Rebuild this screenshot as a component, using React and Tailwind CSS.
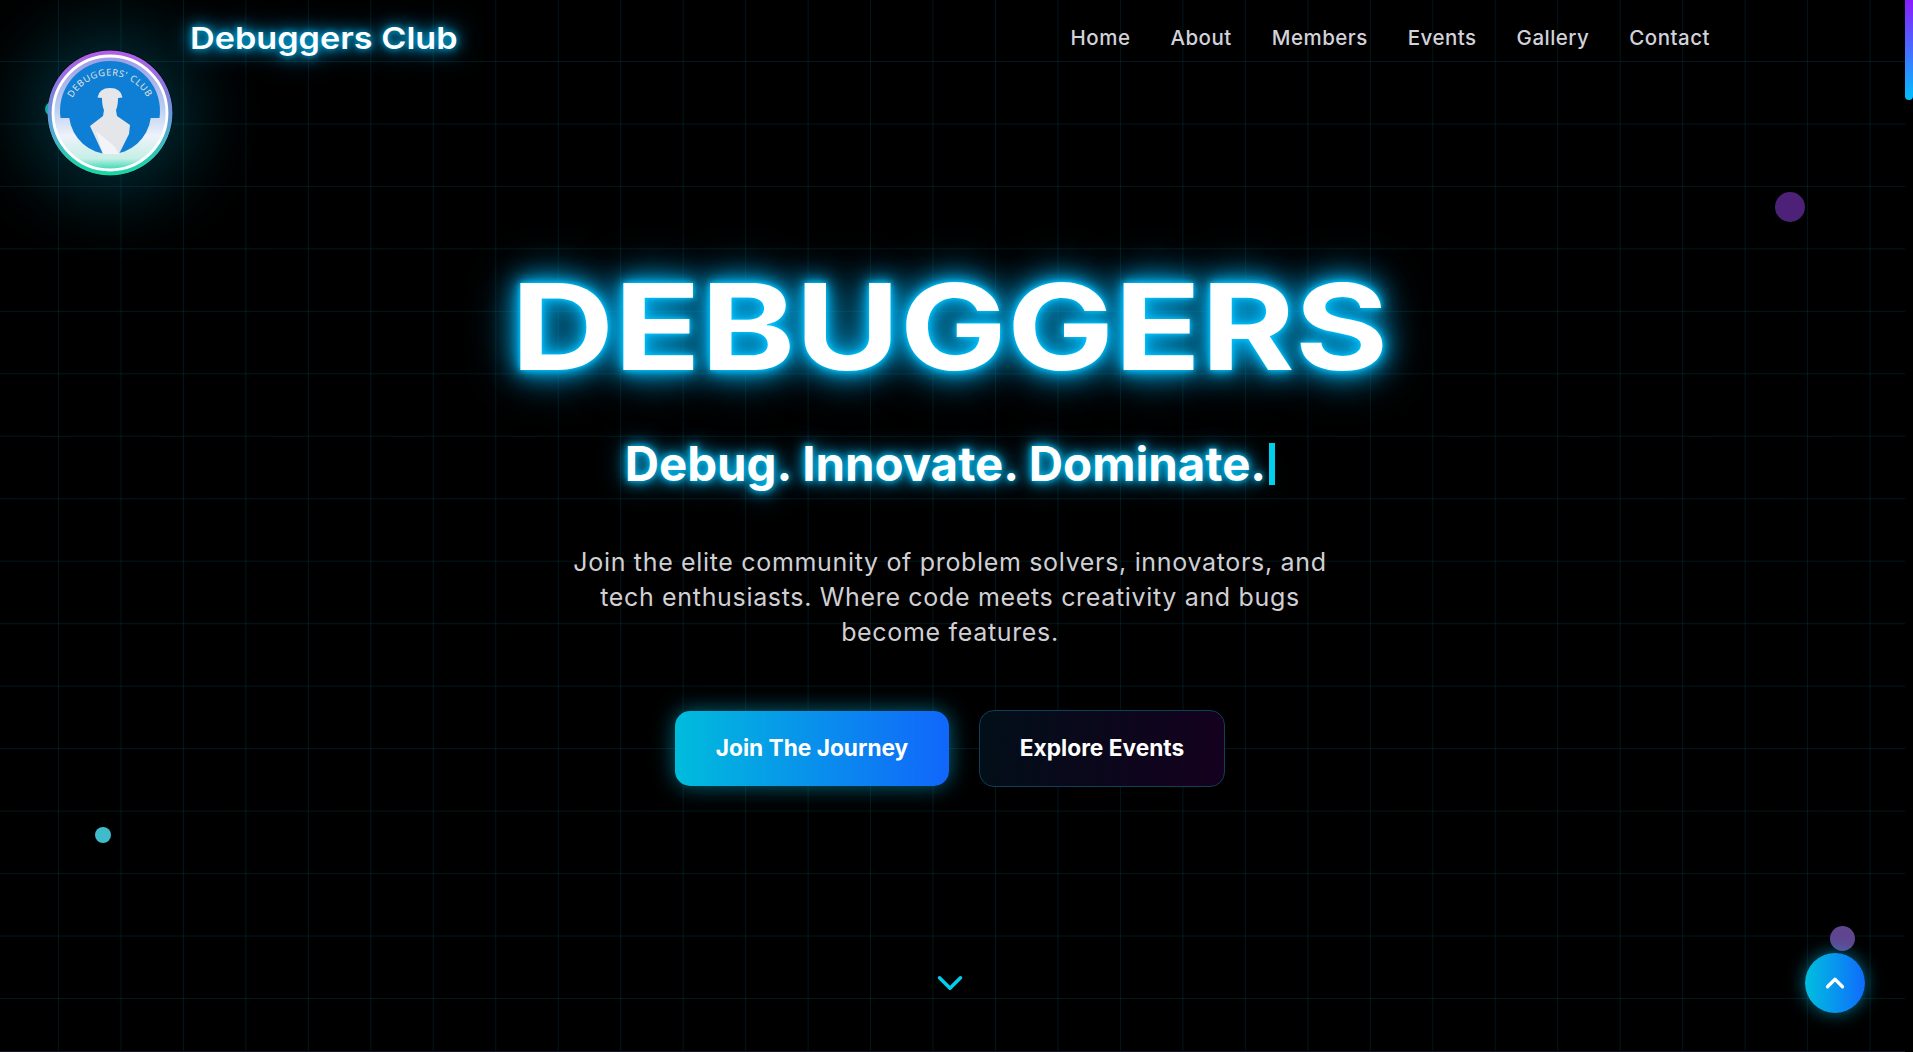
import React from "react";
import { ChevronUp, ChevronDown } from "lucide-react";

function Logo() {
  return (
    <svg viewBox="-63 -63 126 126" className="w-[126px] h-[126px] rounded-full shadow-[0_0_70px_24px_rgba(0,212,255,0.2)]">
      <defs>
        <linearGradient id="ring" x1="0" y1="0" x2="0" y2="1">
          <stop offset="0" stopColor="#b05ee8" />
          <stop offset="0.3" stopColor="#8a7ade" />
          <stop offset="0.6" stopColor="#58a4d6" />
          <stop offset="0.85" stopColor="#2cc8b4" />
          <stop offset="1" stopColor="#18d8a4" />
        </linearGradient>
        <linearGradient id="inner" x1="0" y1="0" x2="0" y2="1">
          <stop offset="0" stopColor="#9c9ce6" />
          <stop offset="0.45" stopColor="#b8cdf0" />
          <stop offset="0.7" stopColor="#eef2fa" />
          <stop offset="0.9" stopColor="#c6efe6" />
          <stop offset="1" stopColor="#30d8b0" />
        </linearGradient>
        <path id="arc" d="M-42,-2 A42.6,42.6 0 0 1 42,-2" />
      </defs>
      <circle r="62.5" fill="url(#ring)" />
      <circle r="57" fill="url(#inner)" stroke="#ffffff" strokeWidth="2.8" />
      <path d="M-49.5,5 A50,50 0 1 1 49.5,5 L40.7,5 A41,41 0 0 1 -40.7,5 Z" fill="#0f7fd6" />
      <path d="M-12.5,-15.5 Q-11,-25 0,-25 Q11,-25 12.5,-15.5 L8,-15 Q8,-7 6,-3 L7,3 L20,12 L19,21 L9,41 L-7,41 L-20,13 L-7,3 L-6,-3 Q-8,-7 -8,-15 Z" fill="#e4e6ea" />
      <path d="M-14,18 L4,33 L9,41 L-7,41 Z" fill="#f2f4fa" />
      <text fontFamily="'Open Sans', sans-serif" fontSize="9.2" fill="#ece8dc" letterSpacing="0.7">
        <textPath href="#arc" startOffset="50%" textAnchor="middle">DEBUGGERS' CLUB</textPath>
      </text>
    </svg>
  );
}

const links = ["Home", "About", "Members", "Events", "Gallery", "Contact"];

export default function App() {
  return (
    <div className="h-screen w-full flex bg-black overflow-hidden">
      <div className="relative flex-1 min-w-0 flex flex-col items-center border-b border-[#15142a] bg-[linear-gradient(to_right,rgba(0,212,255,0.11)_1px,transparent_1px),linear-gradient(to_bottom,rgba(0,212,255,0.11)_1px,transparent_1px)] bg-[size:62.47px_62.47px] bg-[position:-4.5px_-1.5px]">
        <header className="w-full h-[76px] flex items-start justify-between pl-[47px] pr-[195px]">
          <div className="flex items-start">
            <div className="relative mt-[50px] w-[126px] h-[126px]">
              <div className="absolute left-[-2px] top-[52px] w-[14px] h-[14px] rounded-full bg-[#12a99a]" />
              <div className="absolute inset-0"><Logo /></div>
            </div>
            <div className="ml-[17px] mt-[14px] font-['Inter'] font-semibold text-[30px] leading-[48px] text-white whitespace-nowrap origin-left scale-x-[1.14] [text-shadow:0_0_6px_#00aeea,0_0_14px_#00aeea,0_0_26px_rgba(0,180,240,0.8)]">
            Debuggers Club
            </div>
          </div>
          <nav className="flex gap-[40px] pt-[26px] font-['Inter'] font-medium text-[20.5px] tracking-[0.48px] leading-[24px] text-[#d2d2da]">
            {links.map((l) => (
              <a key={l} className="whitespace-nowrap">{l}</a>
            ))}
          </nav>
        </header>

        <div className="w-full pr-[5px] flex flex-col items-center">
          <h1 className="mt-[191px] font-['Inter'] font-bold text-[120px] leading-[120px] text-white whitespace-nowrap scale-x-[1.19] [text-shadow:0_0_4px_#00c8ff,0_0_10px_#00c0ff,0_0_20px_#00aeea,0_0_32px_#00a0e0,0_0_48px_rgba(0,180,240,0.6)]">
            DEBUGGERS
          </h1>

          <div className="mt-[47px] flex items-center font-['Inter'] font-bold text-[47.4px] leading-[60px] text-white whitespace-nowrap [text-shadow:0_0_6px_#00c8ff,0_0_14px_#00b4f0,0_0_26px_rgba(0,180,240,0.8)]">
            Debug. Innovate. Dominate.
            <span className="ml-[3px] w-[6px] h-[42px] bg-[#00cfee]" />
          </div>

          <p className="mt-[51px] w-[800px] text-center font-['Inter'] text-[25px] tracking-[0.67px] leading-[35px] text-[#d0d0d4]">
            Join the elite community of problem solvers, innovators, and
            <br />
            tech enthusiasts. Where code meets creativity and bugs
            <br />
            become features.
          </p>

          <div className="mt-[60px] flex items-center gap-[30px] font-['Inter'] font-bold text-[22.7px]">
            <button className="w-[274px] h-[75px] rounded-[15px] text-white bg-[linear-gradient(90deg,#00bcdc,#1166fb)] shadow-[0_0_22px_rgba(0,212,255,0.5)]">
              Join The Journey
            </button>
            <button className="w-[246px] h-[77px] rounded-[15px] text-white border border-[#0e4058] bg-[linear-gradient(100deg,#010f18,#15001f)]">
              Explore Events
            </button>
          </div>
        </div>

        <ChevronDown className="absolute left-[929px] top-[962px] w-[42px] h-[42px] text-[#00cfee]" strokeWidth={2} />

        <div className="absolute left-[95px] top-[827px] w-[16px] h-[16px] rounded-full bg-[#3fbccb]" />
        <div className="absolute left-[1775px] top-[192px] w-[30px] h-[30px] rounded-full bg-[#4d2178]" />
        <div className="absolute left-[1830px] top-[926px] w-[25px] h-[25px] rounded-full bg-[#60458f]" />

        <button className="absolute left-[1805px] top-[953px] w-[60px] h-[60px] rounded-full flex items-center justify-center text-white bg-[linear-gradient(90deg,#00bfe0,#0f6cfb)] shadow-[0_0_18px_rgba(0,212,255,0.55)]">
          <ChevronUp className="w-[30px] h-[30px]" strokeWidth={2.6} />
        </button>
      </div>
      <div className="w-[8px] shrink-0 bg-black">
        <div className="h-[100px] rounded-b-[6px] bg-[linear-gradient(180deg,#8a1cff,#00bfff)]" />
      </div>
    </div>
  );
}
